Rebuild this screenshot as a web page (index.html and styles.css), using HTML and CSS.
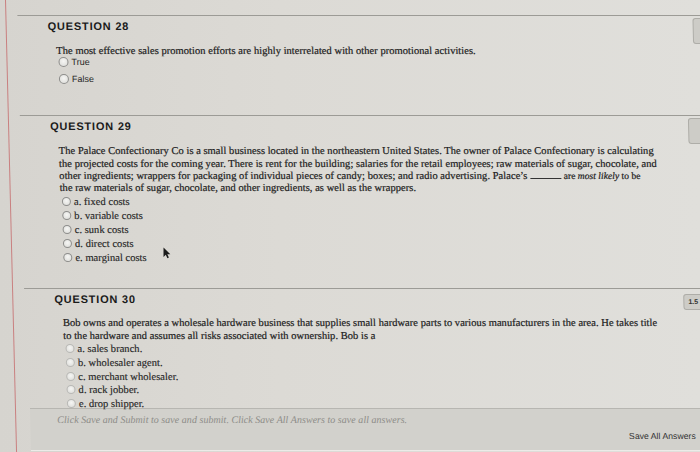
FILE: index.html
```html
<!DOCTYPE html>
<html lang="en">
<head>
<meta charset="utf-8">
<title>Questions</title>
<link rel="stylesheet" href="styles.css">
</head>
<body>
<div class="screen">
  <div class="page">
    <section class="question q28">
      <div class="pts pts-tall"></div>
      <h2 class="q-title">QUESTION 28</h2>
      <p class="q-text">The most effective sales promotion efforts are highly interrelated with other promotional activities.</p>
      <ul class="opts opts-tf">
        <li class="opt"><span class="radio"></span>True</li>
        <li class="opt"><span class="radio"></span>False</li>
      </ul>
    </section>
    <section class="question q29">
      <div class="pts pts-tall"></div>
      <h2 class="q-title">QUESTION 29</h2>
      <p class="q-text">The Palace Confectionary Co is a small business located in the northeastern United States. The owner of Palace Confectionary is calculating<br>the projected costs for the coming year. There is rent for the building; salaries for the retail employees; raw materials of sugar, chocolate, and<br>other ingredients; wrappers for packaging of individual pieces of candy; boxes; and radio advertising. Palace’s <span class="blank"></span> <span class="small">are <i>most likely</i> to be</span><br>the raw materials of sugar, chocolate, and other ingredients, as well as the wrappers.</p>
      <ul class="opts">
        <li class="opt"><span class="radio"></span>a. fixed costs</li>
        <li class="opt"><span class="radio"></span>b. variable costs</li>
        <li class="opt"><span class="radio"></span>c. sunk costs</li>
        <li class="opt"><span class="radio"></span>d. direct costs</li>
        <li class="opt"><span class="radio"></span>e. marginal costs</li>
      </ul>
    </section>
    <section class="question q30">
      <div class="pts"><span class="pts-label">1.5</span></div>
      <h2 class="q-title">QUESTION 30</h2>
      <p class="q-text">Bob owns and operates a wholesale hardware business that supplies small hardware parts to various manufacturers in the area. He takes title<br>to the hardware and assumes all risks associated with ownership. Bob is a</p>
      <ul class="opts opts-light">
        <li class="opt"><span class="radio"></span>a. sales branch.</li>
        <li class="opt"><span class="radio"></span>b. wholesaler agent.</li>
        <li class="opt"><span class="radio"></span>c. merchant wholesaler.</li>
        <li class="opt"><span class="radio"></span>d. rack jobber.</li>
        <li class="opt"><span class="radio"></span>e. drop shipper.</li>
      </ul>
    </section>
  </div>
  <footer class="bar">
    <p class="bar-note">Click Save and Submit to save and submit. Click Save All Answers to save all answers.</p>
    <div class="bar-actions"><span class="save-all">Save All Answers</span></div>
  </footer>
</div>
<svg class="cursor" width="8" height="12" viewBox="0 0 8 12"><path d="M0.5 0.5 L0.5 10 L2.8 7.8 L4.4 11.2 L5.9 10.5 L4.3 7.2 L7.3 7.2 Z" fill="#1c1c1c"/></svg>
</body>
</html>
```

FILE: styles.css
```css
html, body {
  margin: 0;
  padding: 0;
  height: 100%;
  overflow: hidden;
}

body {
  background: linear-gradient(90deg, #d6d4cf 0%, #dcdad5 40%, #e0dfdb 100%);
  font-family: "Liberation Serif", "Times New Roman", serif;
  color: #222;
  position: relative;
}

.screen {
  margin-left: 5px;
  width: 760px;
  height: 452px;
  border-left: 1px solid #c98080;
  transform: skewX(1.4deg);
  transform-origin: 0 0;
  display: flex;
  flex-direction: column;
}

.page {
  padding-left: 11px;
  padding-top: 15px;
}

.question {
  position: relative;
  border-top: 1px solid #9c9b96;
}

.q28 { padding-bottom: 31px; }
.q29 { padding-bottom: 24px; }
.q30 { padding-bottom: 0; }

.q-title {
  margin: 3px 0 0 30px;
  font-family: "Liberation Sans", Arial, sans-serif;
  font-weight: bold;
  font-size: 11px;
  line-height: 14px;
  letter-spacing: 0.8px;
  color: #1b1b1b;
}

.q-text {
  margin: 12px 0 0 38px;
  font-size: 10.6px;
  line-height: 12.3px;
  color: #1c1c1c;
  -webkit-text-stroke: 0.2px #1c1c1c;
  white-space: nowrap;
}

.q30 .q-text { margin-top: 11px; }

.blank {
  display: inline-block;
  width: 31px;
  border-bottom: 1px solid #333;
  vertical-align: baseline;
}

.small { font-size: 9.6px; }

.opts {
  list-style: none;
  margin: 0 0 0 40px;
  padding: 0;
}

.opt {
  display: flex;
  align-items: center;
  height: 14px;
  font-size: 10.6px;
  color: #262626;
  -webkit-text-stroke: 0.15px #262626;
  white-space: nowrap;
}

.radio {
  width: 9px;
  height: 9px;
  box-sizing: border-box;
  border-radius: 50%;
  border: 1px solid #8e8e8c;
  background: radial-gradient(circle at 50% 40%, #f6f6f4 0%, #e2e2df 70%, #cfcfcc 100%);
  margin-right: 3px;
  flex: none;
}

.opts-tf .opt {
  height: 10px;
  font-family: "Liberation Sans", Arial, sans-serif;
  font-size: 9px;
  -webkit-text-stroke: 0;
}
.opts-tf .radio { width: 10px; height: 10px; }
.opts-tf .opt + .opt { margin-top: 7px; }

.opts-light .opt { height: 13.7px; }
.opts-light .radio { border-color: #b9b9b6; }

.pts {
  position: absolute;
  top: 2px;
  height: 26px;
  box-sizing: border-box;
  padding: 0 0 0 4px;
  width: 70px;
  border: 1px solid #aeada8;
  border-radius: 3px;
  background: #cdccc7;
  font-family: "Liberation Sans", Arial, sans-serif;
  font-weight: bold;
  font-size: 7px;
  line-height: 14px;
  color: #333;
}
.q28 .pts { left: 675px; }
.q29 .pts { left: 668px; }
.q30 .pts { left: 659px; top: 5px; height: 16px; }

.bar {
  margin: -3px 0 0 14px;
  border-top: 1px solid #b7b6b1;
  background: #d2d1cc;
  height: 43px;
  box-sizing: border-box;
  padding: 5px 0 0 27px;
  border-bottom: 1px solid #ecebe8;
}

.bar-note {
  margin: 0;
  font-style: italic;
  font-size: 10.1px;
  line-height: 12px;
  color: #8e8d89;
  white-space: nowrap;
}

.bar-actions {
  width: 638px;
  display: flex;
  justify-content: flex-end;
  margin-top: 5px;
}

.save-all {
  font-family: "Liberation Sans", Arial, sans-serif;
  font-size: 8.7px;
  line-height: 10px;
  color: #333;
}

.cursor {
  position: absolute;
  left: 163px;
  top: 247px;
}
```
